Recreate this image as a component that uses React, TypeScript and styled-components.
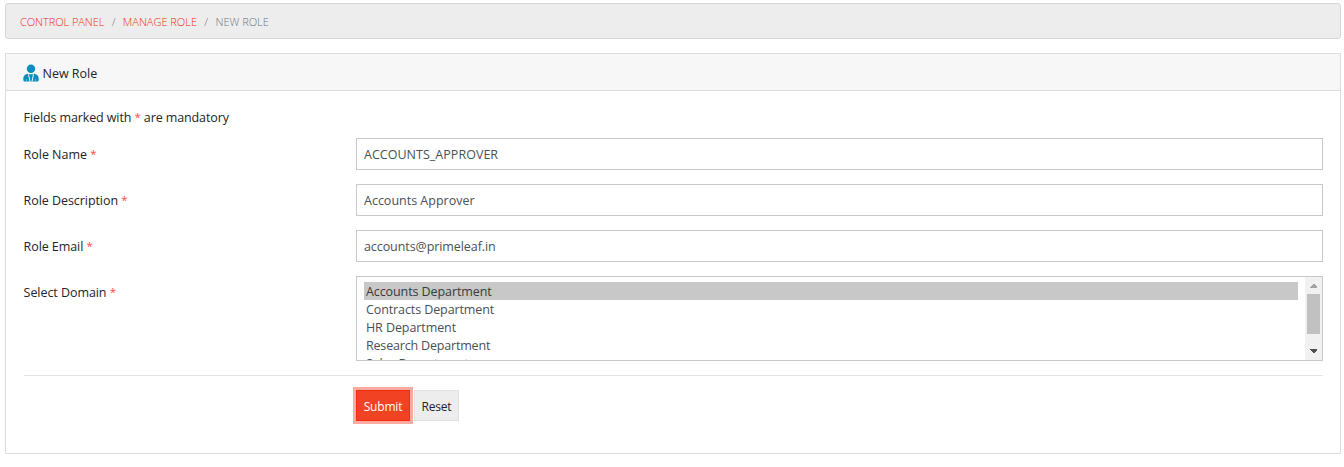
import React from "react";
import styled, { createGlobalStyle } from "styled-components";

const GlobalStyle = createGlobalStyle`
  * { box-sizing: border-box; }
  body {
    margin: 0;
    background: #fff;
    color: #212529;
    font-family: "Open Sans", "Noto Sans", sans-serif;
    font-size: 12.5px;
    line-height: 18px;
  }
`;

const Page = styled.main`
  padding: 3px 3px 0 5px;
`;

const Text = styled.span<{ $spacing?: number }>`
  letter-spacing: ${(p) => p.$spacing ?? 0}px;
  white-space: pre;
`;

const Breadcrumb = styled.nav`
  display: flex;
  align-items: center;
  height: 36px;
  margin-bottom: 14px;
  padding: 2px 14px 0;
  background: #ededed;
  border: 1px solid #d6d6d6;
  border-radius: 3px;
  font-size: 11px;
  font-weight: 300;
  color: #6c757d;
`;

const Crumb = styled.a`
  color: #f22c10;
`;

const Slash = styled.span`
  width: 18.5px;
  text-align: center;
`;

const Panel = styled.section`
  height: 401px;
  border: 1px solid #dcdcdc;
  background: #fff;
`;

const PanelHeader = styled.header`
  display: flex;
  align-items: center;
  gap: 4px;
  height: 37px;
  padding: 1px 17px 0 16.5px;
  background: #f7f7f7;
  border-bottom: 1px solid #dcdcdc;
`;

const Title = styled.h1`
  margin: 0;
  padding-top: 2px;
  font-size: 12.5px;
  font-weight: 400;
`;

const PanelBody = styled.form`
  padding: 18px 17px 0 17.6px;
`;

const Note = styled.p`
  margin: 0 0 11px;
`;

const Required = styled.span`
  color: #ff4a3d;
  font-size: 11.5px;
  line-height: 1;
  vertical-align: 1px;
`;

const Row = styled.div`
  display: grid;
  grid-template-columns: 332.4px 1fr;
  margin-bottom: 14px;
`;

const Label = styled.label`
  padding-top: 8px;
`;

const Input = styled.input<{ $spacing: number }>`
  width: 100%;
  height: 32px;
  padding: 1px 7px 0;
  border: 1px solid #c8c8c8;
  border-radius: 0;
  background: #fff;
  color: #495057;
  font: inherit;
  letter-spacing: ${(p) => p.$spacing}px;
`;

const ListBox = styled.div`
  display: flex;
  height: 85px;
  border: 1px solid #c8c8c8;
  overflow: hidden;
  color: #495057;
`;

const Options = styled.div`
  flex: 1;
  padding: 5px 7px 0;
`;

const Option = styled.div<{ $selected?: boolean }>`
  height: 18px;
  padding: 1px 0 0 2px;
  background: ${(p) => (p.$selected ? "#c8c8c8" : "transparent")};
  color: ${(p) => (p.$selected ? "#343a40" : "#495057")};
`;

const ScrollBar = styled.div`
  display: flex;
  flex-direction: column;
  align-items: center;
  width: 17px;
  height: 83px;
  background: #f1f1f1;
`;

const ScrollButton = styled.svg`
  display: block;
  width: 17px;
  height: 17px;
`;

const Thumb = styled.div`
  width: 13px;
  height: 40px;
  margin-bottom: 9px;
  background: #c1c1c1;
`;

const Divider = styled.hr`
  height: 1px;
  margin: 0 0 14px;
  border: 0;
  background: #e3e3e3;
`;

const Actions = styled.div`
  display: flex;
  gap: 4px;
  margin-left: 332.4px;
`;

const Button = styled.button<{ $primary?: boolean }>`
  width: ${(p) => (p.$primary ? 54 : 45)}px;
  height: 31px;
  padding: 2px 0 0;
  border: 1px solid ${(p) => (p.$primary ? "#f02c10" : "#e0e0e0")};
  border-radius: 0;
  background: ${(p) => (p.$primary ? "#f24224" : "#ededed")};
  box-shadow: ${(p) => (p.$primary ? "0 0 0 3px #f9ab9f" : "none")};
  color: ${(p) => (p.$primary ? "#fff" : "#212529")};
  font: inherit;
  font-size: 12px;
  letter-spacing: -0.2px;
`;

const UserIcon = () => (
  <svg width="16" height="18" viewBox="0 0 16 18" fill="#078dbe">
    <ellipse cx="8" cy="4.8" rx="4.2" ry="4.3" />
    <path d="M4.500 9.800 Q8 10.800 11.500 9.800 Q15.700 10.800 15.700 14.500 V16 Q15.700 17.500 14.200 17.500 H1.800 Q.3 17.500 .3 16 V14.500 Q.3 10.800 4.500 9.800z" />
    <path d="M5.500 10.300 7 17.500M10.500 10.300 9 17.500" stroke="#f7f7f7" strokeWidth="1" fill="none" />
    <path d="M3.700 15V17.500M12.300 15V17.500" stroke="#f7f7f7" strokeWidth=".4" />
  </svg>
);

const fields = [
  { label: "Role Name", value: "ACCOUNTS_APPROVER", labelSpacing: -0.03, spacing: 0.03 },
  { label: "Role Description", value: "Accounts Approver", labelSpacing: -0.06, spacing: 0 },
  { label: "Role Email", value: "accounts@primeleaf.in", labelSpacing: -0.08, spacing: -0.08 },
];

const departments = [
  { name: "Accounts Department", spacing: -0.09 },
  { name: "Contracts Department", spacing: -0.1 },
  { name: "HR Department", spacing: -0.08 },
  { name: "Research Department", spacing: -0.18 },
  { name: "Sales Department", spacing: -0.1 },
];

export default function App() {
  return (
    <Page>
      <GlobalStyle />
      <Breadcrumb>
        <Crumb><Text $spacing={-0.06}>CONTROL PANEL</Text></Crumb>
        <Slash>/</Slash>
        <Crumb><Text>MANAGE ROLE</Text></Crumb>
        <Slash>/</Slash>
        <Text>NEW ROLE</Text>
      </Breadcrumb>
      <Panel>
        <PanelHeader>
          <UserIcon />
          <Title><Text>New Role</Text></Title>
        </PanelHeader>
        <PanelBody>
          <Note><Text $spacing={-0.11}>Fields marked with <Required>*</Required> are mandatory</Text></Note>
          {fields.map((f) => (
            <Row key={f.label}>
              <Label><Text $spacing={f.labelSpacing}>{f.label} <Required>*</Required></Text></Label>
              <Input defaultValue={f.value} $spacing={f.spacing} />
            </Row>
          ))}
          <Row>
            <Label><Text $spacing={-0.06}>Select Domain <Required>*</Required></Text></Label>
            <ListBox>
              <Options>
                {departments.map((d, i) => (
                  <Option key={d.name} $selected={i === 0}><Text $spacing={d.spacing}>{d.name}</Text></Option>
                ))}
              </Options>
              <ScrollBar>
                <ScrollButton viewBox="0 0 17 17" fill="#a3a3a3" shapeRendering="crispEdges"><path d="M5 11V10L8.500 6.500 12 10V11z" /></ScrollButton>
                <Thumb />
                <ScrollButton viewBox="0 0 17 17" fill="#505050" shapeRendering="crispEdges"><path d="M5 6V7L8.500 10.500 12 7V6z" /></ScrollButton>
              </ScrollBar>
            </ListBox>
          </Row>
          <Divider />
          <Actions>
            <Button type="button" $primary>Submit</Button>
            <Button type="button">Reset</Button>
          </Actions>
        </PanelBody>
      </Panel>
    </Page>
  );
}
